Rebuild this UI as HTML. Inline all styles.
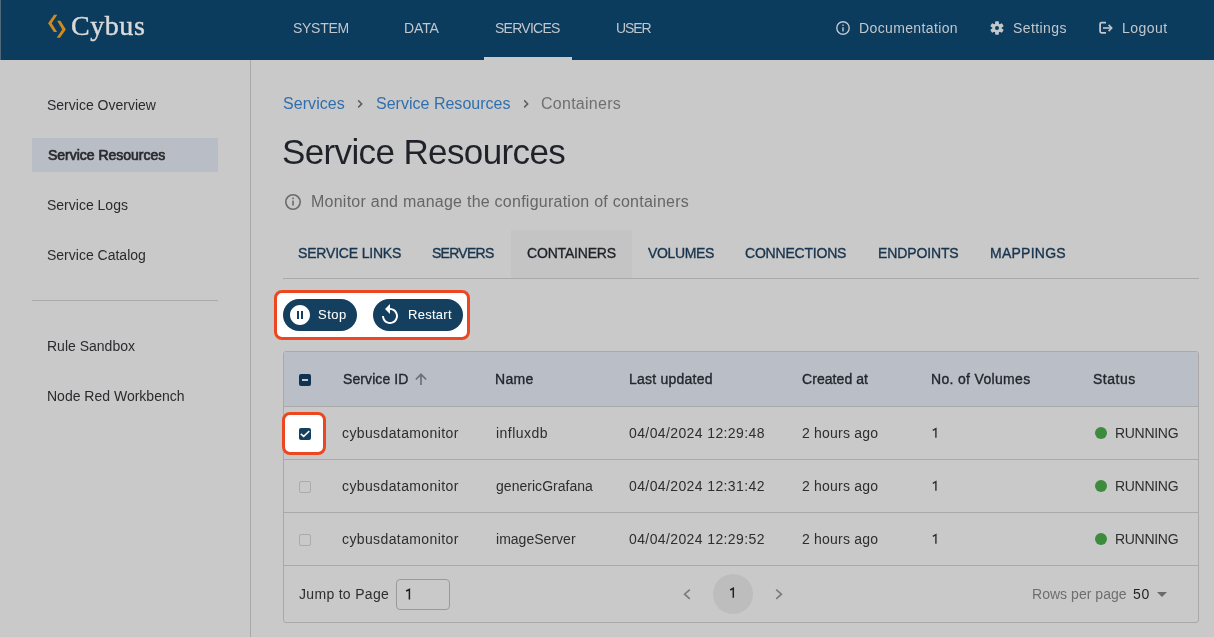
<!DOCTYPE html>
<html><head><meta charset="utf-8">
<style>
html,body{margin:0;padding:0;}
body{width:1214px;height:637px;overflow:hidden;position:relative;background:#c9c9c9;font-family:"Liberation Sans", sans-serif;}
.a{position:absolute;box-sizing:border-box;}
.t{position:absolute;white-space:nowrap;will-change:transform;}
svg{position:absolute;overflow:visible;}
</style></head><body>
<!-- header -->
<div class="a" style="left:0;top:0;width:1214px;height:60px;background:#0b3b5d;"></div>
<div class="a" style="left:0;top:0;width:1px;height:60px;background:#50687b;"></div>
<div class="a" style="left:484px;top:57px;width:88px;height:3px;background:#c9c9c9;"></div>
<!-- logo chevrons -->
<svg style="left:0;top:0" width="1214" height="60">
<path d="M54.1 14.8 L57.3 14.8 L51.7 23.3 L57.1 31.9 L53.9 31.9 L48.1 23.3 Z" fill="#d08a1d"/>
<path d="M57.2 20.8 L60.4 20.8 L65.9 29.4 L59.9 37.8 L56.7 37.8 L62.2 29.4 Z" fill="#d08a1d"/>
<!-- info icon -->
<circle cx="843" cy="28" r="6.2" fill="none" stroke="#c2c7cc" stroke-width="1.4"/>
<rect x="842.3" y="27.2" width="1.4" height="4.3" fill="#c2c7cc"/>
<rect x="842.3" y="24.5" width="1.4" height="1.4" fill="#c2c7cc"/>
<!-- gear -->
<g transform="translate(997 28)" fill="#c2c7cc">
<circle r="4.6"/>
<rect x="-1.9" y="-6.7" width="3.8" height="13.4" rx="0.8"/>
<rect x="-1.9" y="-6.7" width="3.8" height="13.4" rx="0.8" transform="rotate(60)"/>
<rect x="-1.9" y="-6.7" width="3.8" height="13.4" rx="0.8" transform="rotate(120)"/>
<circle r="2" fill="#0b3b5d"/>
</g>
<!-- logout -->
<path d="M1106 22.7 H1101.6 Q1100.1 22.7 1100.1 24.2 V31.3 Q1100.1 32.8 1101.6 32.8 H1106" fill="none" stroke="#c2c7cc" stroke-width="1.8"/>
<path d="M1103 28 H1111.2" fill="none" stroke="#c2c7cc" stroke-width="1.6"/>
<path d="M1108.6 24.9 L1111.7 28 L1108.6 31.1" fill="none" stroke="#c2c7cc" stroke-width="1.6"/>
</svg>
<!-- sidebar -->
<div class="a" style="left:250px;top:60px;width:1px;height:577px;background:#a9a9a9;"></div>
<div class="a" style="left:32px;top:138px;width:186px;height:34px;background:#b9bec6;"></div>
<div class="a" style="left:32px;top:300px;width:186px;height:1px;background:#a9a9a9;"></div>
<!-- page info icon -->
<svg style="left:0;top:0" width="1214" height="637">
<circle cx="293" cy="202" r="7.2" fill="none" stroke="#6b6b6b" stroke-width="1.6"/>
<rect x="292.2" y="200.6" width="1.6" height="5" fill="#6b6b6b"/>
<rect x="292.2" y="197.6" width="1.6" height="1.6" fill="#6b6b6b"/>
</svg>
<!-- tabs -->
<div class="a" style="left:511px;top:230px;width:121px;height:48px;background:#c4c4c4;"></div>
<div class="a" style="left:283px;top:278px;width:916px;height:1px;background:#a9a9a9;"></div>
<!-- table -->
<div class="a" style="left:283px;top:351px;width:916px;height:272px;border:1px solid #a9a9a9;border-radius:3px;overflow:hidden;">
  <div class="a" style="left:0;top:0;width:914px;height:54px;background:#babfc7;"></div>
  <div class="a" style="left:0;top:54px;width:914px;height:1px;background:#a9a9a9;"></div>
  <div class="a" style="left:0;top:107px;width:914px;height:1px;background:#a9a9a9;"></div>
  <div class="a" style="left:0;top:160px;width:914px;height:1px;background:#a9a9a9;"></div>
  <div class="a" style="left:0;top:213px;width:914px;height:1px;background:#a9a9a9;"></div>
</div>
<!-- header checkbox -->
<div class="a" style="left:299px;top:374px;width:12px;height:12px;background:#0f3350;border-radius:2px;"></div>
<div class="a" style="left:301.8px;top:379px;width:6.5px;height:2px;background:#c5c9d0;"></div>
<!-- sort arrow -->
<svg style="left:0;top:0" width="1214" height="637">
<path d="M421 385 V374.5 M415.8 379.5 L421 374.3 L426.2 379.5" fill="none" stroke="#6e7176" stroke-width="1.7"/>
</svg>
<!-- unchecked -->
<div class="a" style="left:299px;top:481px;width:12px;height:12px;border:1px solid #ababab;border-radius:2px;"></div>
<div class="a" style="left:299px;top:534px;width:12px;height:12px;border:1px solid #ababab;border-radius:2px;"></div>
<!-- dots -->
<div class="a" style="left:1095px;top:427px;width:12px;height:12px;background:#3d8b3d;border-radius:50%;"></div>
<div class="a" style="left:1095px;top:480px;width:12px;height:12px;background:#3d8b3d;border-radius:50%;"></div>
<div class="a" style="left:1095px;top:533px;width:12px;height:12px;background:#3d8b3d;border-radius:50%;"></div>
<!-- footer -->
<div class="a" style="left:396px;top:579px;width:54px;height:31px;border:1px solid #9a9a9a;border-radius:4px;"></div>
<div class="a" style="left:713px;top:574px;width:40px;height:40px;background:#bdbdbd;border-radius:50%;"></div>
<svg style="left:0;top:0" width="1214" height="637">
<path d="M689.8 589.6 L684.6 594.2 L689.8 598.8" fill="none" stroke="#7a7a7a" stroke-width="1.6"/>
<path d="M776.2 589.6 L781.4 594.2 L776.2 598.8" fill="none" stroke="#7a7a7a" stroke-width="1.6"/>
<path d="M1157 592 H1167 L1162 597 Z" fill="#6a6a6a"/>
</svg>
<!-- breadcrumb seps -->
<svg style="left:0;top:0" width="1214" height="637">
<path d="M358.2 100.4 L361.7 103.9 L358.2 107.4" fill="none" stroke="#5f5f5f" stroke-width="1.5"/>
<path d="M524.2 100.4 L527.7 103.9 L524.2 107.4" fill="none" stroke="#5f5f5f" stroke-width="1.5"/>
</svg>
<!-- ones -->
<svg style="left:0;top:0" width="1214" height="637">
<path d="M932.8 430.3 L935.9 428.6 V437.8" fill="none" stroke="#2e2e2e" stroke-width="1.4"/>
<path d="M932.8 483.3 L935.9 481.6 V490.8" fill="none" stroke="#2e2e2e" stroke-width="1.4"/>
<path d="M932.8 536.3 L935.9 534.6 V543.8" fill="none" stroke="#2e2e2e" stroke-width="1.4"/>
<path d="M406.1 591 L409.4 589.5 V599.6" fill="none" stroke="#1f2024" stroke-width="1.5"/>
<path d="M730.2 590 L733.3 588.3 V597.8" fill="none" stroke="#1f2024" stroke-width="1.5"/>
</svg>
<span class="t" id="cybus" style="-webkit-text-stroke:0.45px currentColor;left:71.10px;top:12.15px;font-size:28px;line-height:28px;font-weight:400;color:#dadada;font-family:'Liberation Serif', serif;letter-spacing:0.550px">Cybus</span>
<span class="t" id="sys" style="left:292.60px;top:21.45px;font-size:14px;line-height:14px;font-weight:400;color:#c2c7cc;font-family:'Liberation Sans', sans-serif;letter-spacing:-0.280px">SYSTEM</span>
<span class="t" id="data" style="left:404.20px;top:21.45px;font-size:14px;line-height:14px;font-weight:400;color:#c2c7cc;font-family:'Liberation Sans', sans-serif;letter-spacing:-0.133px">DATA</span>
<span class="t" id="serv" style="left:495.30px;top:21.45px;font-size:14px;line-height:14px;font-weight:400;color:#c2c7cc;font-family:'Liberation Sans', sans-serif;letter-spacing:-0.743px">SERVICES</span>
<span class="t" id="user" style="left:615.50px;top:21.45px;font-size:14px;line-height:14px;font-weight:400;color:#c2c7cc;font-family:'Liberation Sans', sans-serif;letter-spacing:-1.133px">USER</span>
<span class="t" id="doc" style="left:858.70px;top:20.95px;font-size:14px;line-height:14px;font-weight:400;color:#c2c7cc;font-family:'Liberation Sans', sans-serif;letter-spacing:0.367px">Documentation</span>
<span class="t" id="set" style="left:1012.70px;top:20.95px;font-size:14px;line-height:14px;font-weight:400;color:#c2c7cc;font-family:'Liberation Sans', sans-serif;letter-spacing:0.400px">Settings</span>
<span class="t" id="logout" style="left:1121.70px;top:20.95px;font-size:14px;line-height:14px;font-weight:400;color:#c2c7cc;font-family:'Liberation Sans', sans-serif;letter-spacing:0.440px">Logout</span>
<span class="t" id="sb1" style="left:47.20px;top:98.25px;font-size:14px;line-height:14px;font-weight:400;color:#2a2b2e;font-family:'Liberation Sans', sans-serif;letter-spacing:0.000px">Service Overview</span>
<span class="t" id="sb2" style="-webkit-text-stroke:0.7px currentColor;left:48.20px;top:148.25px;font-size:14px;line-height:14px;font-weight:400;color:#2a2b2e;font-family:'Liberation Sans', sans-serif;letter-spacing:-0.013px">Service Resources</span>
<span class="t" id="sb3" style="left:47.20px;top:198.25px;font-size:14px;line-height:14px;font-weight:400;color:#2a2b2e;font-family:'Liberation Sans', sans-serif;letter-spacing:0.000px">Service Logs</span>
<span class="t" id="sb4" style="left:47.20px;top:248.25px;font-size:14px;line-height:14px;font-weight:400;color:#2a2b2e;font-family:'Liberation Sans', sans-serif;letter-spacing:0.000px">Service Catalog</span>
<span class="t" id="sb5" style="left:47.20px;top:339.15px;font-size:14px;line-height:14px;font-weight:400;color:#2a2b2e;font-family:'Liberation Sans', sans-serif;letter-spacing:0.000px">Rule Sandbox</span>
<span class="t" id="sb6" style="left:47.20px;top:389.15px;font-size:14px;line-height:14px;font-weight:400;color:#2a2b2e;font-family:'Liberation Sans', sans-serif;letter-spacing:0.000px">Node Red Workbench</span>
<span class="t" id="bc1" style="left:282.50px;top:95.86px;font-size:16px;line-height:16px;font-weight:400;color:#2f6fae;font-family:'Liberation Sans', sans-serif;letter-spacing:0.057px">Services</span>
<span class="t" id="bc3" style="left:375.70px;top:95.86px;font-size:16px;line-height:16px;font-weight:400;color:#2f6fae;font-family:'Liberation Sans', sans-serif;letter-spacing:0.012px">Service Resources</span>
<span class="t" id="bc5" style="left:541.20px;top:95.86px;font-size:16px;line-height:16px;font-weight:400;color:#6f6f6f;font-family:'Liberation Sans', sans-serif;letter-spacing:0.267px">Containers</span>
<span class="t" id="title" style="left:282.00px;top:134.17px;font-size:35px;line-height:35px;font-weight:400;color:#1f2329;font-family:'Liberation Sans', sans-serif;letter-spacing:-0.625px">Service Resources</span>
<span class="t" id="info" style="left:310.50px;top:193.86px;font-size:16px;line-height:16px;font-weight:400;color:#666666;font-family:'Liberation Sans', sans-serif;letter-spacing:0.249px">Monitor and manage the configuration of containers</span>
<span class="t" id="t1" style="-webkit-text-stroke:0.35px currentColor;left:298.20px;top:246.35px;font-size:14px;line-height:14px;font-weight:400;color:#18344e;font-family:'Liberation Sans', sans-serif;letter-spacing:-0.183px">SERVICE LINKS</span>
<span class="t" id="t2" style="-webkit-text-stroke:0.35px currentColor;left:432.10px;top:246.35px;font-size:14px;line-height:14px;font-weight:400;color:#18344e;font-family:'Liberation Sans', sans-serif;letter-spacing:-0.733px">SERVERS</span>
<span class="t" id="t3" style="-webkit-text-stroke:0.35px currentColor;left:527.00px;top:246.35px;font-size:14px;line-height:14px;font-weight:400;color:#1f2228;font-family:'Liberation Sans', sans-serif;letter-spacing:-0.178px">CONTAINERS</span>
<span class="t" id="t4" style="-webkit-text-stroke:0.35px currentColor;left:647.90px;top:246.35px;font-size:14px;line-height:14px;font-weight:400;color:#18344e;font-family:'Liberation Sans', sans-serif;letter-spacing:-0.367px">VOLUMES</span>
<span class="t" id="t5" style="-webkit-text-stroke:0.35px currentColor;left:745.40px;top:246.35px;font-size:14px;line-height:14px;font-weight:400;color:#18344e;font-family:'Liberation Sans', sans-serif;letter-spacing:-0.200px">CONNECTIONS</span>
<span class="t" id="t6" style="-webkit-text-stroke:0.35px currentColor;left:878.30px;top:246.35px;font-size:14px;line-height:14px;font-weight:400;color:#18344e;font-family:'Liberation Sans', sans-serif;letter-spacing:-0.125px">ENDPOINTS</span>
<span class="t" id="t7" style="-webkit-text-stroke:0.35px currentColor;left:989.60px;top:246.35px;font-size:14px;line-height:14px;font-weight:400;color:#18344e;font-family:'Liberation Sans', sans-serif;letter-spacing:0.257px">MAPPINGS</span>
<span class="t" id="h1" style="-webkit-text-stroke:0.35px currentColor;left:342.70px;top:372.15px;font-size:14px;line-height:14px;font-weight:400;color:#23272d;font-family:'Liberation Sans', sans-serif;letter-spacing:0.089px">Service ID</span>
<span class="t" id="h2" style="-webkit-text-stroke:0.35px currentColor;left:495.10px;top:372.15px;font-size:14px;line-height:14px;font-weight:400;color:#23272d;font-family:'Liberation Sans', sans-serif;letter-spacing:0.333px">Name</span>
<span class="t" id="h3" style="-webkit-text-stroke:0.35px currentColor;left:629.40px;top:372.15px;font-size:14px;line-height:14px;font-weight:400;color:#23272d;font-family:'Liberation Sans', sans-serif;letter-spacing:0.236px">Last updated</span>
<span class="t" id="h4" style="-webkit-text-stroke:0.35px currentColor;left:802.20px;top:372.15px;font-size:14px;line-height:14px;font-weight:400;color:#23272d;font-family:'Liberation Sans', sans-serif;letter-spacing:0.067px">Created at</span>
<span class="t" id="h5" style="-webkit-text-stroke:0.35px currentColor;left:930.80px;top:372.15px;font-size:14px;line-height:14px;font-weight:400;color:#23272d;font-family:'Liberation Sans', sans-serif;letter-spacing:0.323px">No. of Volumes</span>
<span class="t" id="h6" style="-webkit-text-stroke:0.35px currentColor;left:1093.00px;top:372.15px;font-size:14px;line-height:14px;font-weight:400;color:#23272d;font-family:'Liberation Sans', sans-serif;letter-spacing:0.520px">Status</span>
<span class="t" id="r0a" style="left:342.10px;top:426.25px;font-size:14px;line-height:14px;font-weight:400;color:#2e2e2e;font-family:'Liberation Sans', sans-serif;letter-spacing:0.387px">cybusdatamonitor</span>
<span class="t" id="r0b" style="left:495.80px;top:426.25px;font-size:14px;line-height:14px;font-weight:400;color:#2e2e2e;font-family:'Liberation Sans', sans-serif;letter-spacing:0.486px">influxdb</span>
<span class="t" id="r0c" style="left:629.40px;top:426.25px;font-size:14px;line-height:14px;font-weight:400;color:#2e2e2e;font-family:'Liberation Sans', sans-serif;letter-spacing:0.389px">04/04/2024 12:29:48</span>
<span class="t" id="r0d" style="left:802.20px;top:426.25px;font-size:14px;line-height:14px;font-weight:400;color:#2e2e2e;font-family:'Liberation Sans', sans-serif;letter-spacing:0.200px">2 hours ago</span>
<span class="t" id="r0f" style="left:1115.00px;top:426.25px;font-size:14px;line-height:14px;font-weight:400;color:#2e2e2e;font-family:'Liberation Sans', sans-serif;letter-spacing:-0.300px">RUNNING</span>
<span class="t" id="r1a" style="left:342.10px;top:479.25px;font-size:14px;line-height:14px;font-weight:400;color:#2e2e2e;font-family:'Liberation Sans', sans-serif;letter-spacing:0.387px">cybusdatamonitor</span>
<span class="t" id="r1b" style="left:495.80px;top:479.25px;font-size:14px;line-height:14px;font-weight:400;color:#2e2e2e;font-family:'Liberation Sans', sans-serif;letter-spacing:0.031px">genericGrafana</span>
<span class="t" id="r1c" style="left:629.40px;top:479.25px;font-size:14px;line-height:14px;font-weight:400;color:#2e2e2e;font-family:'Liberation Sans', sans-serif;letter-spacing:0.389px">04/04/2024 12:31:42</span>
<span class="t" id="r1d" style="left:802.20px;top:479.25px;font-size:14px;line-height:14px;font-weight:400;color:#2e2e2e;font-family:'Liberation Sans', sans-serif;letter-spacing:0.200px">2 hours ago</span>
<span class="t" id="r1f" style="left:1115.00px;top:479.25px;font-size:14px;line-height:14px;font-weight:400;color:#2e2e2e;font-family:'Liberation Sans', sans-serif;letter-spacing:-0.300px">RUNNING</span>
<span class="t" id="r2a" style="left:342.10px;top:532.25px;font-size:14px;line-height:14px;font-weight:400;color:#2e2e2e;font-family:'Liberation Sans', sans-serif;letter-spacing:0.387px">cybusdatamonitor</span>
<span class="t" id="r2b" style="left:495.80px;top:532.25px;font-size:14px;line-height:14px;font-weight:400;color:#2e2e2e;font-family:'Liberation Sans', sans-serif;letter-spacing:0.020px">imageServer</span>
<span class="t" id="r2c" style="left:629.40px;top:532.25px;font-size:14px;line-height:14px;font-weight:400;color:#2e2e2e;font-family:'Liberation Sans', sans-serif;letter-spacing:0.389px">04/04/2024 12:29:52</span>
<span class="t" id="r2d" style="left:802.20px;top:532.25px;font-size:14px;line-height:14px;font-weight:400;color:#2e2e2e;font-family:'Liberation Sans', sans-serif;letter-spacing:0.200px">2 hours ago</span>
<span class="t" id="r2f" style="left:1115.00px;top:532.25px;font-size:14px;line-height:14px;font-weight:400;color:#2e2e2e;font-family:'Liberation Sans', sans-serif;letter-spacing:-0.300px">RUNNING</span>
<span class="t" id="jump" style="left:299.20px;top:587.45px;font-size:14px;line-height:14px;font-weight:400;color:#2e2e2e;font-family:'Liberation Sans', sans-serif;letter-spacing:0.309px">Jump to Page</span>
<span class="t" id="rpp" style="left:1031.70px;top:586.95px;font-size:14px;line-height:14px;font-weight:400;color:#6e6e6e;font-family:'Liberation Sans', sans-serif;letter-spacing:0.033px">Rows per page</span>
<span class="t" id="fifty" style="left:1133.40px;top:586.95px;font-size:14px;line-height:14px;font-weight:400;color:#1f1f1f;font-family:'Liberation Sans', sans-serif;letter-spacing:0.800px">50</span>
<!-- spotlight 1 -->
<div class="a" style="left:274px;top:290px;width:196px;height:50px;border:3px solid #ec4720;border-radius:8px;background:#fff;"></div>
<div class="a" style="left:283px;top:299px;width:74px;height:32px;border-radius:16px;background:#143f5f;"></div>
<div class="a" style="left:373px;top:299px;width:90px;height:32px;border-radius:16px;background:#143f5f;"></div>
<svg style="left:288px;top:303px" width="24" height="24" viewBox="0 0 24 24"><path fill="#fff" d="M12 2C6.48 2 2 6.480 2 12s4.48 10 10 10 10-4.48 10-10S17.52 2 12 2zm-1 14H9V8h2v8zm4 0h-2V8h2v8z"/></svg>
<svg style="left:378px;top:303px" width="24" height="24" viewBox="0 0 24 24"><path fill="#fff" d="M12 5V1L7 6l5 5V7c3.31 0 6 2.690 6 6s-2.69 6-6 6-6-2.69-6-6H4c0 4.42 3.58 8 8 8s8-3.58 8-8-3.58-8-8-8z"/></svg>
<!-- spotlight 2 -->
<div class="a" style="left:282px;top:412px;width:44px;height:43px;border:3px solid #ec4720;border-radius:8px;background:#fff;"></div>
<div class="a" style="left:299px;top:428px;width:12px;height:12px;background:#143f5f;border-radius:2px;"></div>
<svg style="left:0;top:0" width="1214" height="637">
<path d="M300.8 433.8 L303.7 436.4 L309.3 431" fill="none" stroke="#fff" stroke-width="1.6"/>
</svg>
<span class="t" id="stop" style="-webkit-text-stroke:0.05px currentColor;left:317.50px;top:308.10px;font-size:13px;line-height:13px;font-weight:400;color:#ffffff;font-family:'Liberation Sans', sans-serif;letter-spacing:0.467px">Stop</span>
<span class="t" id="restart" style="-webkit-text-stroke:0.05px currentColor;left:407.50px;top:308.10px;font-size:13px;line-height:13px;font-weight:400;color:#ffffff;font-family:'Liberation Sans', sans-serif;letter-spacing:0.267px">Restart</span>
</body></html>
